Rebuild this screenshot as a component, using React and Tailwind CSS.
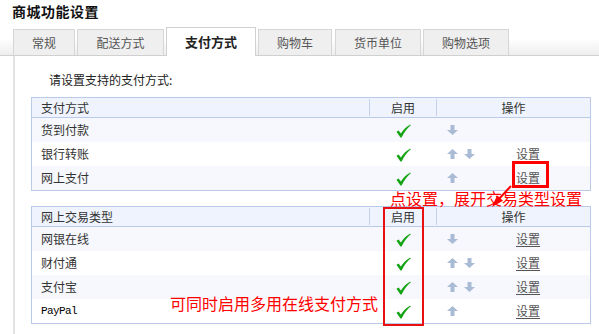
import React from "react";

const Check = () => (
  <svg width="15" height="14" viewBox="0 0 15 14" className="block">
    <path d="M0.5 7.8 L2.6 6.6 L4.9 9.6 C7.4 5.6 10.4 2.6 14.5 0.5 L14.6 1.6 C11.2 4.2 8.2 8.2 5.6 13.5 L4.4 13.5 Z" fill="#13a313" />
  </svg>
);

const Up = () => (
  <svg width="11" height="10" viewBox="0 0 11 10" className="block">
    <path d="M5.5 0 L11 5 L7.5 5 L7.5 10 L3.5 10 L3.5 5 L0 5 Z" fill="#a9bbd5" />
  </svg>
);

const Down = () => (
  <svg width="11" height="10" viewBox="0 0 11 10" className="block">
    <path d="M5.5 10 L11 5 L7.5 5 L7.5 0 L3.5 0 L3.5 5 L0 5 Z" fill="#a9bbd5" />
  </svg>
);

const tabs = [
  { label: "常规", w: "w-[62px]" },
  { label: "配送方式", w: "w-[87px]" },
  { label: "支付方式", w: "w-[90px]", active: true },
  { label: "购物车", w: "w-[74px]" },
  { label: "货币单位", w: "w-[86px] ml-[1px]" },
  { label: "购物选项", w: "w-[86px]" },
];

function Table({ title, rows }) {
  return (
    <div className="w-[560px] border border-[#b9cbe9] text-[12px] text-[#333]">
      <div className="flex h-[20px] items-center bg-[#eef3fd] border-b border-[#b9cbe9] leading-[16px]">
        <div className="w-[337px] pl-[9px]">{title}</div>
        <div className="h-[17px] w-px bg-[#c3d1ea]" />
        <div className="w-[66px] text-center">启用</div>
        <div className="h-[17px] w-px bg-[#c3d1ea]" />
        <div className="flex-1 text-center">操作</div>
      </div>
      {rows.map((r, i) => (
        <div
          key={i}
          className={
            "flex h-[24px] items-center leading-[16px] " + (i % 2 === 0 ? "bg-[#f6f8fd]" : "bg-white")
          }
        >
          <div
            className={
              "w-[337px] pl-[9px] " +
              (r.mono
                ? "font-['Liberation_Mono',monospace] text-[11px] tracking-[-0.6px] text-[#000]"
                : "")
            }
          >
            {r.name}
          </div>
          <div className="flex w-[67px] justify-center pl-[2px] pt-[2px]">
            <Check />
          </div>
          <div className="flex flex-1 items-center pl-[11px]">
            <div className="flex w-[69px] items-center gap-[6px]">
              {r.up && <Up />}
              {r.down && <Down />}
            </div>
            {r.set && (
              <span className="text-[#555] underline underline-offset-2">设置</span>
            )}
          </div>
        </div>
      ))}
    </div>
  );
}

export default function App() {
  return (
    <div className="relative h-[334px] w-[599px] overflow-hidden bg-white font-['Noto_Sans_CJK_SC','Liberation_Sans',sans-serif] text-[#333]">
      <div className="h-[27px] pl-[12px] text-[14px] font-bold leading-[22px] tracking-[0.5px] text-[#111]">
        商城功能设置
      </div>
      <div className="flex h-[29px] items-end gap-[2px] border-b border-[#d0d0d0] bg-linear-to-b from-white from-40% to-[#eeeeee] pl-[13px]">
        {tabs.map((t) =>
          t.active ? (
            <div
              key={t.label}
              className={
                t.w +
                " -mb-px flex h-[29px] items-center justify-center border border-b-0 border-[#d0d0d0] bg-white text-[13px] font-bold text-[#222]"
              }
            >
              {t.label}
            </div>
          ) : (
            <div
              key={t.label}
              className={
                t.w +
                " flex h-[26px] items-center justify-center border border-b-0 border-[#d6d6d6] bg-[#efefef] text-[12px] text-[#555]"
              }
            >
              {t.label}
            </div>
          )
        )}
      </div>
      <div className="ml-[13px] h-[278px] border-l-2 border-[#e2e2e2] pl-[16px] pt-[16px]">
        <div className="ml-[18px] text-[12px] leading-[16px] text-[#222]">请设置支持的支付方式:</div>
        <div className="mt-[9px]">
          <Table
            title="支付方式"
            rows={[
              { name: "货到付款", down: true },
              { name: "银行转账", up: true, down: true, set: true },
              { name: "网上支付", up: true, set: true },
            ]}
          />
        </div>
        <div className="mt-[15px]">
          <Table
            title="网上交易类型"
            rows={[
              { name: "网银在线", down: true, set: true },
              { name: "财付通", up: true, down: true, set: true },
              { name: "支付宝", up: true, down: true, set: true },
              { name: "PayPal", mono: true, up: true, set: true },
            ]}
          />
        </div>
      </div>

      {/* red annotations */}
      <div className="absolute left-[512px] top-[161px] h-[27px] w-[37px] border-[3px] border-[#ff0000]" />
      <div className="absolute left-[383px] top-[207px] h-[119px] w-[41px] border-2 border-[#e81010]" />
      <div className="absolute left-[390px] top-[190px] text-[16px] leading-[16px] text-[#ff0000]">
        点设置，展开交易类型设置
      </div>
      <div className="absolute left-[170px] top-[295px] text-[16px] leading-[16px] text-[#ff0000]">
        可同时启用多用在线支付方式
      </div>
      <svg className="pointer-events-none absolute left-0 top-0" width="599" height="334">
        <line x1="511" y1="186" x2="498" y2="200" stroke="#ff0000" strokeWidth="2" />
        <polygon points="492,207 503,200.8 497,195.4" fill="#ff0000" />
      </svg>
    </div>
  );
}
